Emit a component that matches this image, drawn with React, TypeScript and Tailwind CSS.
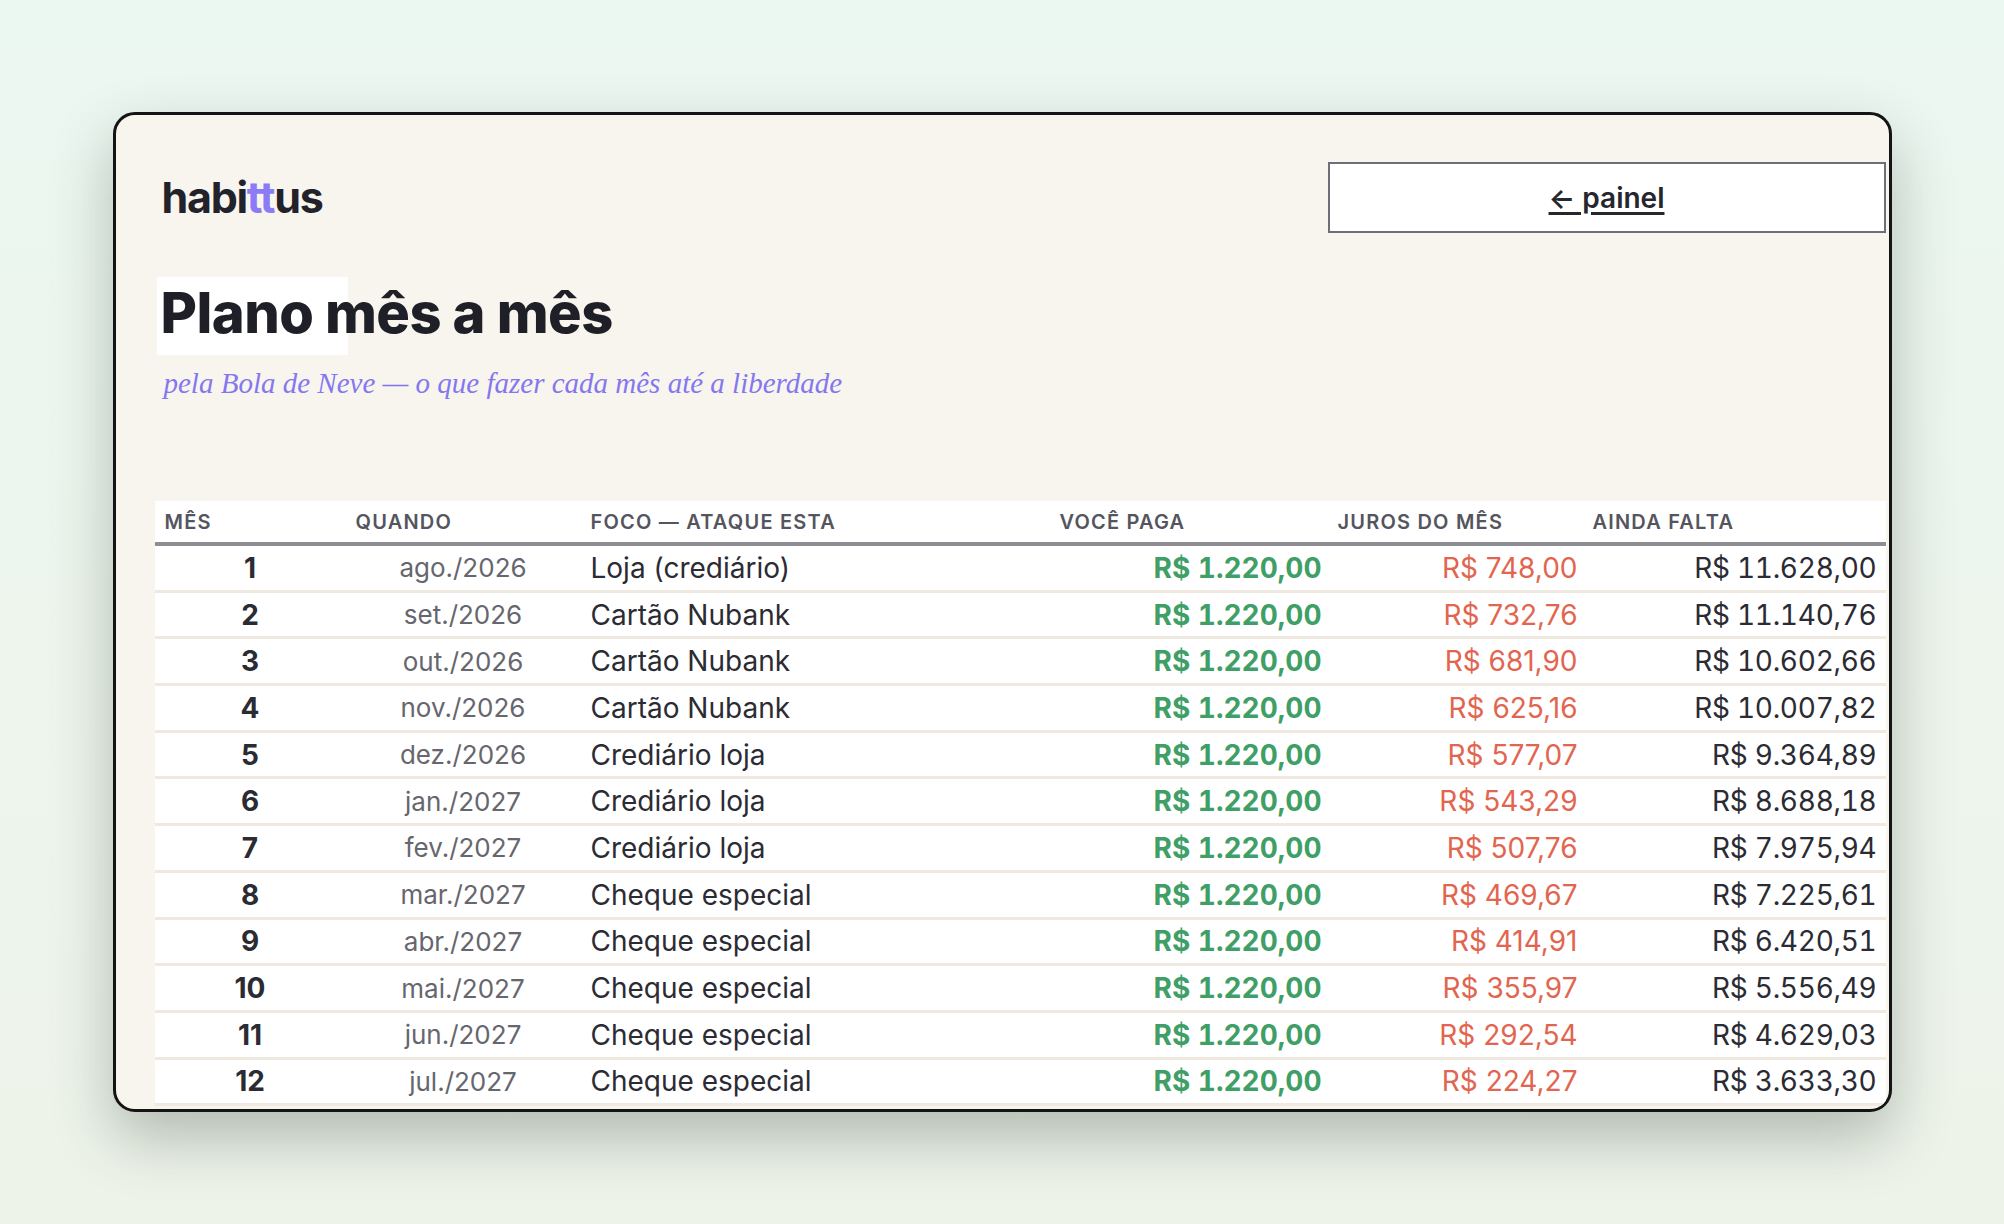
const rows: [number, string, string, string, string][] = [
  [1, 'ago./2026', 'Loja (crediário)', 'R$ 748,00', 'R$ 11.628,00'],
  [2, 'set./2026', 'Cartão Nubank', 'R$ 732,76', 'R$ 11.140,76'],
  [3, 'out./2026', 'Cartão Nubank', 'R$ 681,90', 'R$ 10.602,66'],
  [4, 'nov./2026', 'Cartão Nubank', 'R$ 625,16', 'R$ 10.007,82'],
  [5, 'dez./2026', 'Crediário loja', 'R$ 577,07', 'R$ 9.364,89'],
  [6, 'jan./2027', 'Crediário loja', 'R$ 543,29', 'R$ 8.688,18'],
  [7, 'fev./2027', 'Crediário loja', 'R$ 507,76', 'R$ 7.975,94'],
  [8, 'mar./2027', 'Cheque especial', 'R$ 469,67', 'R$ 7.225,61'],
  [9, 'abr./2027', 'Cheque especial', 'R$ 414,91', 'R$ 6.420,51'],
  [10, 'mai./2027', 'Cheque especial', 'R$ 355,97', 'R$ 5.556,49'],
  [11, 'jun./2027', 'Cheque especial', 'R$ 292,54', 'R$ 4.629,03'],
  [12, 'jul./2027', 'Cheque especial', 'R$ 224,27', 'R$ 3.633,30'],
];

const cols = 'grid grid-cols-[191px_235px_469px_278px_255px_304px]';

export default function App() {
  return (
    <div className="min-h-screen w-full bg-gradient-to-b from-[#ebf7f1] to-[#eef3e9] flex justify-center pt-[112px] font-['Inter',sans-serif]">
      <div className="w-[1779px] h-[1000px] rounded-[22px] border-[3px] border-[#141414] bg-[#f8f5ee] overflow-hidden shadow-[0_26px_60px_rgba(40,55,45,0.3)] pl-[39px] pr-[3px] pt-[47px]">
        {/* Top bar */}
        <div className="flex items-center justify-between h-[71px]">
          <div className="ml-[7px] text-[43px] font-bold tracking-[-0.03em] text-[#22222b] leading-none">
            habi<span className="text-[#8b7cf6]">tt</span>us
          </div>
          <a className="w-[558px] h-[71px] border-2 border-[#6e6e78] bg-white flex items-center justify-center text-[28px] font-semibold text-[#26262e] underline underline-offset-4 decoration-[3px]">
            ← painel
          </a>
        </div>

        {/* Title */}
        <div className="relative mt-[44px]">
          <div className="absolute left-[2px] top-0 w-[191px] h-[78px] bg-white" />
          <h1 className="relative pl-[6px] h-[78px] leading-[72px] text-[56px] font-extrabold tracking-[-0.01em] text-[#1f1f27]">
            Plano mês a mês
          </h1>
        </div>
        <p className="mt-[11px] pl-[9px] text-[29px] italic font-['Liberation_Serif',serif] text-[#8577ee] leading-[34px]">
          pela Bola de Neve — o que fazer cada mês até a liberdade
        </p>

        {/* Table */}
        <div className="mt-[101px]">
          <div className={`${cols} h-[45px] bg-white border-b-4 border-[#8d8d93] items-center text-[20px] font-semibold uppercase tracking-[0.06em] text-[#55555e]`}>
            <div className="pl-[10px]">Mês</div>
            <div className="pl-[10px]">Quando</div>
            <div className="pl-[10px]">Foco — ataque esta</div>
            <div className="pl-[10px]">Você paga</div>
            <div className="pl-[10px]">Juros do mês</div>
            <div className="pl-[10px]">Ainda falta</div>
          </div>
          {rows.map(([n, when, focus, juros, falta]) => (
            <div
              key={n}
              className={`${cols} h-[46.7px] bg-white border-b-[3px] border-[#efe9df] items-center text-[28px] text-[#2b2b33]`}
            >
              <div className="text-center font-bold">{n}</div>
              <div className="text-center text-[26px] text-[#66666e]">{when}</div>
              <div className="pl-[10px]">{focus}</div>
              <div className="text-right pr-[6px] font-bold tabular-nums text-[#3f9f66]">R$ 1.220,00</div>
              <div className="text-right pr-[5px] text-[#e2654f]">{juros}</div>
              <div className="text-right pr-[10px] tabular-nums tracking-[-0.01em]">{falta}</div>
            </div>
          ))}
        </div>
      </div>
    </div>
  );
}
